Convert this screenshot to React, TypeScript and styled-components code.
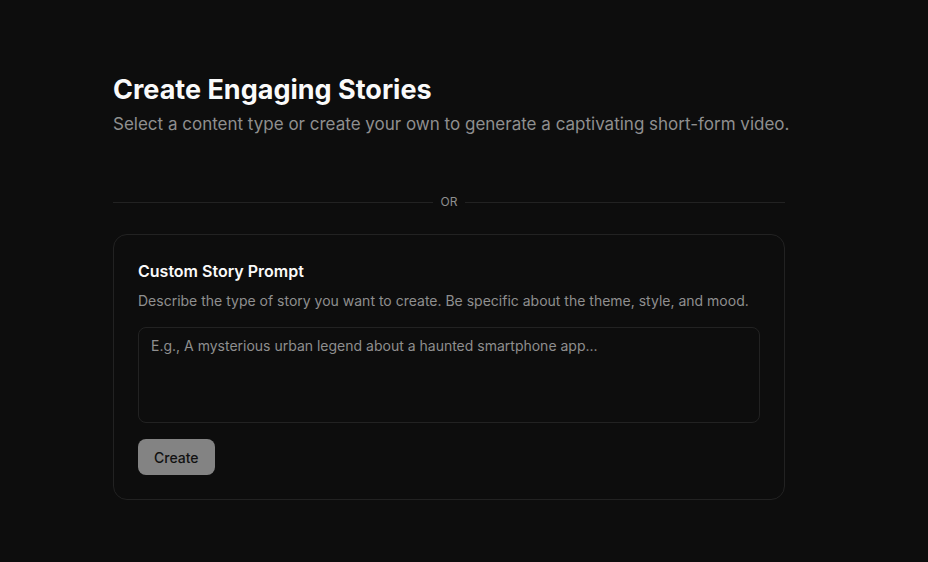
import React, { useState } from "react";
import styled, { createGlobalStyle } from "styled-components";

const GlobalStyle = createGlobalStyle`
  *, *::before, *::after { box-sizing: border-box; }
  body {
    margin: 0;
    background: #0d0d0d;
    color: #fafafa;
    font-family: Inter, "Liberation Sans", sans-serif;
    -webkit-font-smoothing: antialiased;
  }
`;

const Page = styled.main`
  padding: 72px 24px 62px;
  @media (min-width: 900px) {
    padding-left: 113px;
    padding-right: 143px;
  }
`;

const Title = styled.h1`
  margin: 0;
  font-size: 27px;
  line-height: 36px;
  font-weight: 700;
`;

const Subtitle = styled.p`
  margin: 0;
  font-size: 17px;
  line-height: 32px;
  color: #8f8f8f;
  @media (min-width: 900px) {
    white-space: nowrap;
  }
`;

const Divider = styled.div`
  display: flex;
  align-items: center;
  gap: 8px;
  margin: 54px 0 24px;
  font-size: 12px;
  line-height: 16px;
  color: #8f8f8f;
  &::before, &::after {
    content: "";
    flex: 1;
    height: 1px;
    background: #222222;
  }
`;

const Card = styled.form`
  display: flex;
  flex-direction: column;
  align-items: flex-start;
  padding: 24px;
  border: 1px solid #222222;
  border-radius: 14px;
`;

const CardTitle = styled.label`
  font-size: 16px;
  line-height: 24px;
  font-weight: 600;
`;

const Hint = styled.p`
  margin: 8px 0 16px;
  font-size: 14px;
  line-height: 20px;
  color: #8f8f8f;
`;

const Prompt = styled.textarea`
  display: block;
  width: 100%;
  height: 96px;
  padding: 8px 12px;
  border: 1px solid #222222;
  border-radius: 8px;
  background: transparent;
  color: inherit;
  font: inherit;
  font-size: 14px;
  line-height: 20px;
  resize: none;
  &::placeholder { color: #8f8f8f; opacity: 1; }
`;

const CreateButton = styled.button`
  height: 36px;
  margin-top: 16px;
  padding: 0 16px;
  border: 0;
  border-radius: 8px;
  background: #838383;
  color: #111111;
  font: inherit;
  font-size: 14px;
  font-weight: 500;
`;

export default function App() {
  const [prompt, setPrompt] = useState("");
  return (
    <>
      <GlobalStyle />
      <Page>
        <Title>Create Engaging Stories</Title>
        <Subtitle>Select a content type or create your own to generate a captivating short-form video.</Subtitle>
        <Divider>OR</Divider>
        <Card>
          <CardTitle htmlFor="prompt">Custom Story Prompt</CardTitle>
          <Hint id="prompt-hint">Describe the type of story you want to create. Be specific about the theme, style, and mood.</Hint>
          <Prompt
            id="prompt"
            aria-describedby="prompt-hint"
            placeholder="E.g., A mysterious urban legend about a haunted smartphone app..."
            value={prompt}
            onChange={(e) => setPrompt(e.target.value)}
          />
          <CreateButton type="submit" disabled={!prompt.trim()}>Create</CreateButton>
        </Card>
      </Page>
    </>
  );
}
